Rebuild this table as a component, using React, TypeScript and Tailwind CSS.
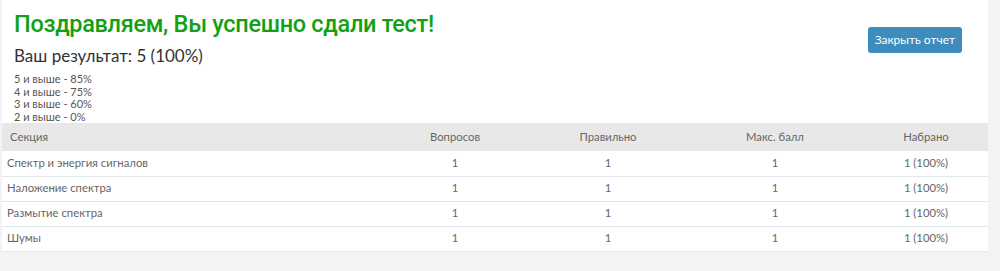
import React from "react";

const rows = [
  "Спектр и энергия сигналов",
  "Наложение спектра",
  "Размытие спектра",
  "Шумы",
];

export default function App() {
  return (
    <div className="w-[1000px] h-[271px] bg-[#f3f3f3] overflow-hidden" style={{ fontFamily: "Lato, 'Open Sans', sans-serif" }}>
      <div className="ml-[2px] w-[986px] bg-white">
        <div className="flex justify-between">
          <div className="pl-[12px] pt-[9px]">
            <h1 className="text-[23.5px] leading-[30px] tracking-[-0.3px] text-[#13a013] font-medium" style={{ fontFamily: "Roboto, sans-serif" }}>
              Поздравляем, Вы успешно сдали тест!
            </h1>
            <div className="mt-[6px] text-[17px] leading-[22px] text-[#333]">
              Ваш результат: 5 (100%)
            </div>
            <div className="mt-[6px] text-[11px] leading-[12.5px] text-[#555]">
              <div>5 и выше - 85%</div>
              <div>4 и выше - 75%</div>
              <div>3 и выше - 60%</div>
              <div>2 и выше - 0%</div>
            </div>
          </div>
          <div className="pt-[26px] pr-[26px]">
            <button className="h-[26px] px-[7px] rounded-[3px] bg-[#3c8dbc] text-white text-[12px] leading-[26px]">
              Закрыть отчет
            </button>
          </div>
        </div>
        <table className="mt-[0px] w-full border-collapse text-[11.3px] text-[#666] table-fixed">
          <colgroup>
            <col className="w-[378px]" />
            <col className="w-[150px]" />
            <col className="w-[156px]" />
            <col className="w-[178px]" />
            <col className="w-[124px]" />
          </colgroup>
          <thead>
            <tr className="bg-[#e8e8e8] h-[28px]">
              <th className="text-left font-normal pl-[8px]">Секция</th>
              <th className="font-normal">Вопросов</th>
              <th className="font-normal">Правильно</th>
              <th className="font-normal">Макс. балл</th>
              <th className="font-normal">Набрано</th>
            </tr>
          </thead>
          <tbody>
            {rows.map((r) => (
              <tr key={r} className="h-[25px] border-b border-[#dfe8e8]">
                <td className="pl-[5px]">{r}</td>
                <td className="text-center">1</td>
                <td className="text-center">1</td>
                <td className="text-center">1</td>
                <td className="text-center">1 (100%)</td>
              </tr>
            ))}
          </tbody>
        </table>
      </div>
    </div>
  );
}
